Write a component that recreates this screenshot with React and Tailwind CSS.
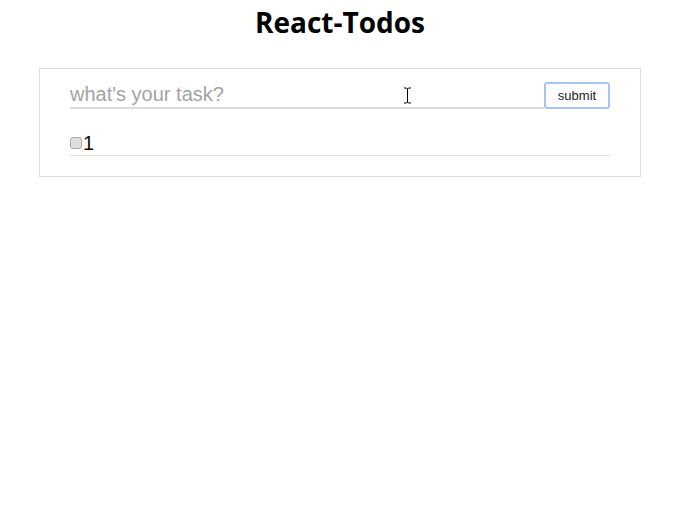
export default function App() {
  return (
    <div className="w-[690px] h-[532px] bg-white font-['Liberation_Sans',Arial,sans-serif] relative">
      <div className="ml-[39px] w-[602px]">
        <h1 className="text-center font-['Open_Sans',sans-serif] font-bold text-[28px] leading-[44px] text-black">
          React-Todos
        </h1>
        <div className="mt-[24px] border border-[#dddddd] px-[30px] pt-[13px] pb-[20px]">
          <div className="flex items-end">
            <input
              type="text"
              placeholder="what's your task?"
              className="flex-1 h-[27px] border-b-2 border-[#dddddd] outline-none text-[20px] text-black placeholder:text-[#a3a3a3] leading-none"
            />
            <button className="w-[66px] h-[27px] border-2 border-[#a5c6f5] rounded-[3px] bg-white text-[13px] text-[#222] leading-none">
              submit
            </button>
          </div>
          <div className="mt-[23px] flex items-center h-[21px] border-b border-[#e2e2e2] pb-[2px] box-content">
            <input
              type="checkbox"
              className="appearance-none w-[12px] h-[12px] m-0 mr-[1px] rounded-[3px] border border-[#a8a8a8] bg-[#dedede]"
            />
            <span className="text-[20px] leading-none text-[#1a0a00]">1</span>
          </div>
        </div>
      </div>
      <svg className="absolute left-[403px] top-[87px]" width="9" height="17" viewBox="0 0 9 17">
        <path d="M1 1h2.5l1 1 1-1H8M4.5 2v13M1 16h2.5l1-1 1 1H8" stroke="#000" fill="none" strokeWidth="1" />
      </svg>
    </div>
  );
}
